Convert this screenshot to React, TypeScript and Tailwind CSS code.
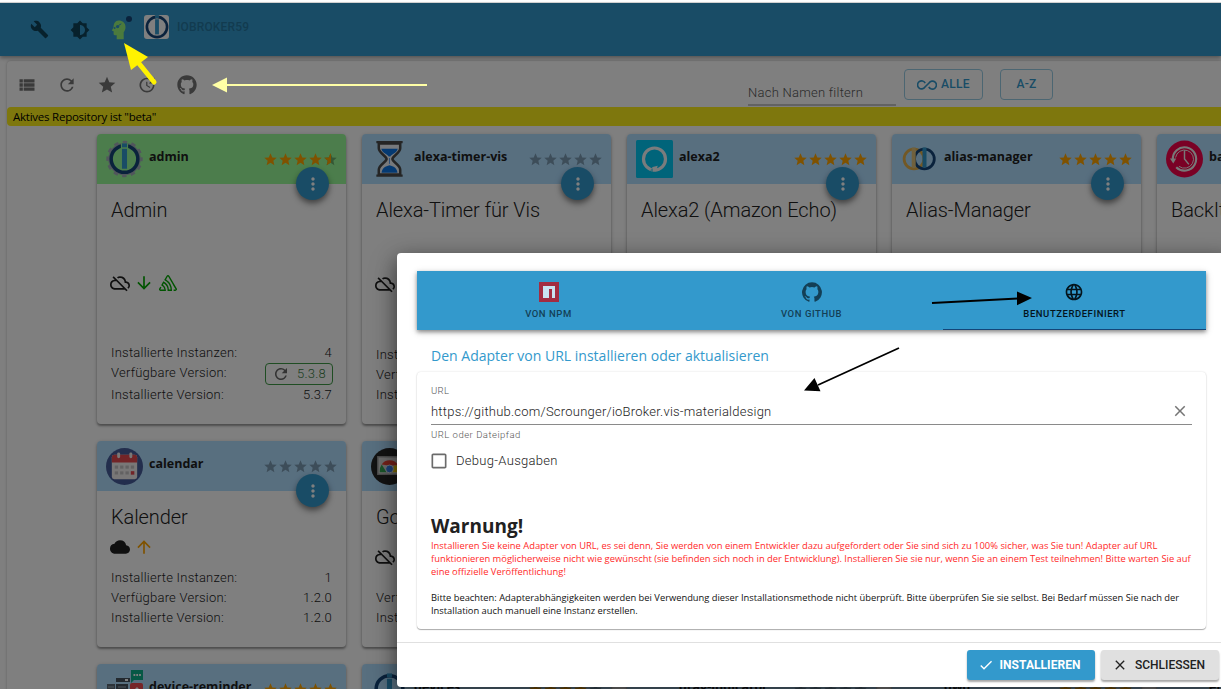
import * as React from "react"
import clsx from "clsx"
import {
  MdArrowDownward,
  MdArrowUpward,
  MdBrightness6,
  MdBuild,
  MdCheck,
  MdCheckBoxOutlineBlank,
  MdClose,
  MdLanguage,
  MdMoreVert,
  MdOutlineCloudOff,
  MdCloud,
  MdRefresh,
  MdStar,
  MdUpdate,
  MdViewList,
} from "react-icons/md"
import { FaGithub } from "react-icons/fa"
import { SiSentry } from "react-icons/si"

const GITHUB_MARK =
  "M12 .3a12 12 0 0 0-3.8 23.38c.6.12.83-.26.83-.57L9 21.07c-3.34.72-4.04-1.61-4.04-1.61-.55-1.39-1.34-1.76-1.34-1.76-1.08-.74.09-.73.09-.73 1.2.09 1.83 1.24 1.83 1.24 1.08 1.83 2.81 1.3 3.5 1 .1-.78.42-1.31.76-1.61-2.67-.3-5.47-1.33-5.47-5.93 0-1.31.47-2.38 1.24-3.22-.14-.3-.54-1.52.1-3.18 0 0 1-.32 3.3 1.23a11.5 11.5 0 0 1 6 0c2.28-1.55 3.29-1.23 3.29-1.23.64 1.66.24 2.88.12 3.18a4.65 4.65 0 0 1 1.23 3.22c0 4.61-2.8 5.63-5.48 5.92.42.36.81 1.1.81 2.22l-.01 3.29c0 .31.2.69.82.57A12 12 0 0 0 12 .3"

function GithubMark({ className }: { className?: string }) {
  return (
    <svg viewBox="0 0 24 24" fill="currentColor" className={className}>
      <path d={GITHUB_MARK} />
    </svg>
  )
}

function IoBrokerLogo({ className, gear }: { className?: string; gear?: boolean }) {
  return (
    <svg viewBox="0 0 38 38" className={className}>
      {gear && (
        <g fill="none" stroke="#a3acb8">
          <circle cx="19" cy="19" r="15.8" strokeWidth="1.8" />
          <circle cx="19" cy="19" r="17.2" strokeWidth="3" strokeDasharray="4.6 4.4" strokeDashoffset="2.3" />
        </g>
      )}
      <circle cx="19" cy="19" r="13.7" fill="none" stroke="#144578" strokeWidth="3.6" />
      <rect x="15.3" y="3" width="7.4" height="7" fill={gear ? "#98fb98" : "#fff"} fillOpacity={gear ? 1 : 0} />
      <rect x="16.4" y="3" width="5.2" height="4" fill="#3399cc" />
      <rect x="16.4" y="8.5" width="5.2" height="20.5" fill="#3399cc" />
    </svg>
  )
}

function ExpertIcon() {
  return (
    <svg viewBox="0 0 24 24" className="h-6 w-6">
      <path
        fill="#96f57b"
        d="M9.500 4.500c4.200 0 7 2.500 7 6.400 0 2.400-.9 4-1.800 5.300v7H7.700v-4H5.900c-.9 0-1.300-.6-1.300-1.400v-2.600l-1.800-.6 1.700-3.200c0-3.800 1.900-6.900 5-6.900z"
      />
      <circle cx="8.600" cy="10.600" r="1.700" fill="#3399cc" />
      <circle cx="5.600" cy="12" r="1" fill="#3399cc" />
      <path d="M9.500 9.500l2.800-1.700" stroke="#3399cc" strokeWidth="1" />
    </svg>
  )
}

function HourglassIcon() {
  return (
    <svg viewBox="0 0 38 38" className="h-[38px] w-[37px]">
      <path d="M8 3v5c0 5 8 8 8 11s-8 6-8 11v5h22v-5c0-5-8-8-8-11s8-6 8-11V3z" fill="#eef3f8" stroke="#4a4a4a" strokeWidth="2.6" />
      <path d="M10.5 8.500h17c-1.500 5-6.500 5.500-7.700 8h-1.600c-1.200-2.500-6.200-3-7.700-8z" fill="#0b74e5" />
      <path d="M10.800 33c.6-4.500 4-6.500 8.200-7.500 4.200 1 7.600 3 8.200 7.500z" fill="#0b74e5" />
      <path d="M19 18v6" stroke="#5a9bea" strokeWidth="1" />
      <path d="M5.500 1.700h27M5.500 36h27" stroke="#4a4a4a" strokeWidth="2.400" />
    </svg>
  )
}

function AlexaIcon() {
  return (
    <svg viewBox="0 0 37 38" className="h-[38px] w-[37px]">
      <rect width="37" height="38" rx="1.500" fill="#00c8f5" />
      <circle cx="18.500" cy="19" r="11" fill="none" stroke="#f4f8fa" strokeWidth="3.200" />
      <path d="M16.800 31.500v-2.900c0-.7-.4-1-1.100-1.300l6-1.500-1.500 5.800z" fill="#f4f8fa" />
      <path d="M15.500 28.500l1.500.6v2.700l-2.800-.8z" fill="#00c8f5" fillOpacity="0.5" />
    </svg>
  )
}

function AliasIcon() {
  return (
    <svg viewBox="0 0 37 38" className="h-[38px] w-[37px]">
      <g fill="none" strokeWidth="2.800">
        <circle cx="13" cy="19" r="9.900" stroke="#e4b04a" />
        <circle cx="23.400" cy="19" r="9.900" stroke="#144578" />
      </g>
      <rect x="10.700" y="7.500" width="4" height="20" fill="#e0c27a" />
      <rect x="21.500" y="7.500" width="4" height="20" fill="#3399cc" />
    </svg>
  )
}

function BackItUpIcon() {
  return (
    <svg viewBox="0 0 38 38" className="h-[38px] w-[37px]">
      <circle cx="19" cy="19" r="19" fill="#f4034a" />
      <g fill="none" stroke="#f0f0f0">
        <path d="M7 20A12 12 0 1 1 10.500 27.500" strokeWidth="2.200" />
        <path d="M9.800 17.500a9.300 9.300 0 1 1 3.500 9" strokeWidth="1" />
        <path d="M19 10v9l4.500 5.500" strokeWidth="1.500" />
      </g>
      <path d="M4 18.500h6.500l-3 5z" fill="#f0f0f0" />
    </svg>
  )
}

function CalendarIcon() {
  return (
    <svg viewBox="0 0 38 38" className="h-[37px] w-[37px]">
      <circle cx="19" cy="19" r="19" fill="#475d9a" />
      <rect x="6" y="7" width="26" height="25" rx="2.500" fill="#f2efef" />
      <path d="M8.500 7h21A2.500 2.500 0 0 1 32 9.500V15H6V9.500A2.500 2.500 0 0 1 8.500 7z" fill="#e5484f" />
      <rect x="11.500" y="4.500" width="3" height="6" rx="1.500" fill="#f2efef" />
      <rect x="24" y="4.500" width="3" height="6" rx="1.500" fill="#f2efef" />
      <g fill="#c6c3c4">
        {[9, 14.5, 20, 25.5].map((x) => (
          <rect key={x} x={x} y="18" width="3.400" height="3.200" />
        ))}
        {[9, 14.5, 20].map((x) => (
          <rect key={x} x={x} y="24" width="3.400" height="3.200" />
        ))}
      </g>
      <rect x="25.500" y="23.800" width="3.600" height="3.600" fill="#e5484f" />
    </svg>
  )
}

function ChromecastIcon() {
  return (
    <svg viewBox="0 0 38 38" className="h-[37px] w-[37px]">
      <circle cx="19" cy="19" r="19" fill="#262626" />
      <rect x="7" y="9" width="24" height="18" fill="#d8d8d8" stroke="#9a9a9a" strokeWidth="1.500" />
      <path d="M9 25a10.500 10.500 0 0 1 2-8l5 8z" fill="#35a853" />
      <path d="M11 17c3-6 14-6 17 1H18z" fill="#ea4335" />
      <path d="M28 18c1 2 1 5 0 7h-8l4-7z" fill="#fbd60a" />
      <circle cx="19" cy="21.500" r="4" fill="#3d82f0" stroke="#e8e8e8" />
    </svg>
  )
}

function DeviceReminderIcon() {
  return (
    <svg viewBox="0 0 37 38" className="h-[38px] w-[37px]">
      <rect x="10" y="8" width="14" height="4" fill="#46535e" />
      <rect x="19" y="9" width="3" height="2" fill="#fff" />
      <path d="M1 14h8v24H1z" fill="#5a6874" />
      <path d="M10 14h12v24H10z" fill="#46535e" />
      <path d="M2 17h6M12 17h8" stroke="#9fb0bd" strokeWidth="1" />
      <path d="M25 0h12v10h-9l-3 3z" fill="#0fb08a" />
      <path d="M27.500 5h1.800M30.300 5h1.800M33.100 5h1.800" stroke="#fff" strokeWidth="1.800" />
      <rect x="24" y="13" width="13" height="16" rx="2" fill="#ed4a50" />
      <path d="M28 20l3-3 3 3v4h-6z" fill="#fff" />
    </svg>
  )
}

interface Adapter {
  name: string
  title: string
  icon: React.ReactNode
  rating: number
  installed?: boolean
  status?: React.ReactNode
  statusClass?: string
  instances?: string
  available?: string
  version?: string
  update?: boolean
}

const cloudOff = <MdOutlineCloudOff className="size-5 text-[#202020]" />

const rows: { height: string; adapters: Adapter[] }[] = [
  {
    height: "h-[290px]",
    adapters: [
      {
        name: "admin",
        title: "Admin",
        icon: <IoBrokerLogo gear className="h-[38px] w-[37px]" />,
        rating: 4.5,
        installed: true,
        status: (
          <>
            {cloudOff}
            <MdArrowDownward className="size-5 text-[#00a800]" />
            <SiSentry className="ml-px size-[18px] text-[#00a800]" />
          </>
        ),
        statusClass: "mt-[51px]",
        instances: "4",
        available: "5.3.8",
        version: "5.3.7",
        update: true,
      },
      {
        name: "alexa-timer-vis",
        title: "Alexa-Timer für Vis",
        icon: <HourglassIcon />,
        rating: 0,
        status: cloudOff,
        statusClass: "mt-[52px]",
        instances: "1",
        available: "1.0.0",
        version: "1.0.0",
      },
      { name: "alexa2", title: "Alexa2 (Amazon Echo)", icon: <AlexaIcon />, rating: 5 },
      { name: "alias-manager", title: "Alias-Manager", icon: <AliasIcon />, rating: 5 },
      { name: "backitup", title: "BackItUp", icon: <BackItUpIcon />, rating: 5 },
    ],
  },
  {
    height: "h-[206px]",
    adapters: [
      {
        name: "calendar",
        title: "Kalender",
        icon: <CalendarIcon />,
        rating: 0,
        status: (
          <>
            <MdCloud className="size-5 text-[#202020]" />
            <MdArrowUpward className="size-5 text-[#ffa500]" />
          </>
        ),
        statusClass: "mt-[8px]",
        instances: "1",
        available: "1.2.0",
        version: "1.2.0",
      },
      {
        name: "chromecast",
        title: "Google Chromecast",
        icon: <ChromecastIcon />,
        rating: 4,
        status: cloudOff,
        statusClass: "mt-[18px]",
        available: "2.3.1",
        version: "2.3.1",
      },
    ],
  },
  {
    height: "h-[206px]",
    adapters: [
      { name: "device-reminder", title: "Device-Reminder", icon: <DeviceReminderIcon />, rating: 5 },
      { name: "devices", title: "Geräte", icon: <IoBrokerLogo className="h-[38px] w-[37px]" />, rating: 4 },
      { name: "drag-indicator", title: "Drag-Indicator", icon: null, rating: 0 },
      { name: "dwd", title: "DWD", icon: null, rating: 5 },
      { name: "energymanager", title: "Energie", icon: null, rating: 5 },
    ],
  },
]

function Rating({ value }: { value: number }) {
  return (
    <div className="flex">
      {[0, 1, 2, 3, 4].map((i) => (
        <span key={i} className="relative size-[15px]">
          <MdStar className={clsx("size-[15px]", value >= i + 1 ? "text-[#ffa500]" : "text-black/30")} />
          {value > i && value < i + 1 && (
            <span className="absolute inset-y-0 left-0 w-1/2 overflow-hidden">
              <MdStar className="size-[15px] text-[#ffa500]" />
            </span>
          )}
        </span>
      ))}
    </div>
  )
}

function InfoRow({ label, children }: { label: string; children: React.ReactNode }) {
  return (
    <div className="flex h-5 items-center justify-between text-[13px] leading-5 font-light tracking-[0.23px] whitespace-nowrap">
      <span>{label}</span>
      <span>{children}</span>
    </div>
  )
}

function AdapterCard({ adapter, height }: { adapter: Adapter; height: string }) {
  return (
    <div
      className={clsx(
        "relative flex w-[249px] shrink-0 flex-col rounded bg-white shadow-[0_2px_2px_rgba(0,0,0,0.3),0_1px_4px_rgba(0,0,0,0.2)]",
        height
      )}
    >
      <div
        className={clsx(
          "flex h-[50px] shrink-0 items-center rounded-t pr-[8px] pl-[9px]",
          adapter.installed ? "bg-[#98fb98]" : "bg-[#b0deff]"
        )}
      >
        <div className="w-[37px] shrink-0">{adapter.icon}</div>
        <span className="mb-[4px] ml-[6px] flex-1 font-['Open_Sans',sans-serif] text-[12.500px] font-bold whitespace-nowrap">
          {adapter.name}
        </span>
        <Rating value={adapter.rating} />
      </div>
      <div className="absolute top-[33px] right-[17px] flex size-[33px] items-center justify-center rounded-full bg-[#3399cc] text-white shadow-[0_3px_5px_rgba(0,0,0,0.35),0_4px_9px_rgba(0,0,0,0.2)]">
        <MdMoreVert className="size-[20px]" />
      </div>
      <div className="flex flex-1 flex-col px-[14px] pt-[14px] pb-[19px]">
        <div className="text-[20px] leading-6 font-light tracking-[-0.1px] whitespace-nowrap">{adapter.title}</div>
        <div className={clsx("-ml-px flex h-5 items-center gap-[4px]", adapter.statusClass)}>{adapter.status}</div>
        <div className="mt-auto">
          {adapter.instances && <InfoRow label="Installierte Instanzen:">{adapter.instances}</InfoRow>}
          {adapter.available && !adapter.update && <InfoRow label="Verfügbare Version:">{adapter.available}</InfoRow>}
          {adapter.available && adapter.update && (
            <div className="flex h-[22px] items-center justify-between text-[13px] font-light tracking-[0.23px] whitespace-nowrap">
              <span className="mb-[2px]">Verfügbare Version:</span>
              <span className="-mr-px flex h-[22px] w-[68px] items-center justify-between rounded border border-[#3f9b46] pr-[6px] pl-[6px] text-[#3a7d3f]">
                <MdRefresh className="size-[18px] text-[#666]" />
                {adapter.available}
              </span>
            </div>
          )}
          {adapter.version && <InfoRow label="Installierte Version:">{adapter.version}</InfoRow>}
        </div>
      </div>
    </div>
  )
}

function Header() {
  return (
    <header className="relative flex h-[53px] shrink-0 items-start bg-[#3399cc] pl-[30px] shadow-[0_2px_4px_rgba(0,0,0,0.35)]">
      <MdBuild className="mt-[17px] size-[19px] text-[#0f4259]" />
      <MdBrightness6 className="mt-[17px] ml-[21px] size-[20px] text-[#0f4259]" />
      <div className="relative mt-[13px] ml-[19px]">
        <ExpertIcon />
        <span className="absolute top-0 right-[1px] size-[6px] rounded-full bg-[#144578]" />
      </div>
      <div className="mt-[12px] ml-[11px] flex h-6 w-[25px] items-center justify-center rounded-[3px] bg-white">
        <IoBrokerLogo className="size-7 shrink-0" />
      </div>
      <span className="mt-[16px] ml-[8px] text-[12px] leading-4 font-medium tracking-[0.15px] text-[#2577a0]">
        IOBROKER59
      </span>
    </header>
  )
}

function Toolbar() {
  return (
    <div className="flex h-[45px] shrink-0 items-center pl-[10px] text-[#757575]">
      <div className="flex w-[742px] items-center gap-[20px]">
        <MdViewList className="size-5" />
        <MdRefresh className="size-5" />
        <MdStar className="size-5" />
        <MdUpdate className="size-5" />
        <FaGithub className="size-5" />
      </div>
      <div className="-ml-[11px] h-6 w-[148px] translate-y-[8.500px] border-b border-[#8a8a8a] text-[13px] leading-[22px] font-light tracking-[0.25px] text-[#555]">
        Nach Namen filtern
      </div>
      <button className="ml-[8px] flex h-[31px] w-[79px] items-center justify-center gap-1 rounded border border-[#99cce5] pb-px text-[12px] font-medium tracking-[0.3px] text-[#3399cc]">
        <svg viewBox="0 0 20 10" className="mt-[2px] h-[10px] w-[20px]" fill="none" stroke="currentColor" strokeWidth="1.600">
          <path d="M8.200 3.200A4 4 0 1 0 8 7l4-4a4 4 0 1 1-.2 3.800" />
        </svg>
        ALLE
      </button>
      <button className="ml-[17px] h-[31px] w-[53px] rounded border border-[#99cce5] pb-px text-[12px] font-medium tracking-[0.3px] text-[#3399cc]">
        A-Z
      </button>
    </div>
  )
}

function InstallDialog() {
  return (
    <div className="absolute top-[253px] left-[397px] flex h-[434px] w-[834px] flex-col rounded bg-white shadow-[0_6px_20px_rgba(0,0,0,0.4),0_10px_30px_rgba(0,0,0,0.25)]">
      <div className="flex flex-1 flex-col pt-[18px] pl-5">
        <div className="flex h-[59px] w-[789px] shrink-0 bg-[#3399cc] text-[9.500px] font-medium tracking-[0.55px] text-[#133f56] shadow-[0_2px_4px_rgba(0,0,0,0.4),0_2px_8px_rgba(0,0,0,0.15)]">
          <div className="flex flex-1 flex-col items-center pt-[11px]">
            <svg viewBox="0 0 20 20" className="size-5">
              <rect width="20" height="20" fill="#a32c41" />
              <path d="M4 4h12v12h-3V7h-3v9H4z" fill="#c9e2f1" />
            </svg>
            <span className="mt-[6px] leading-3">VON NPM</span>
          </div>
          <div className="flex flex-1 flex-col items-center pt-[11px]">
            <GithubMark className="size-5" />
            <span className="mt-[6px] leading-3">VON GITHUB</span>
          </div>
          <div className="flex flex-1 flex-col items-center border-b border-[#144578] pt-[11px] text-[#04141c]">
            <MdLanguage className="-ml-px size-5" />
            <span className="mt-[6px] leading-3">BENUTZERDEFINIERT</span>
          </div>
        </div>
        <div className="mt-[15px] h-[22px] pl-[14px] font-['Open_Sans',sans-serif] text-[14.030px] leading-[22px] text-[#3399cc]">
          Den Adapter von URL installieren oder aktualisieren
        </div>
        <div className="mt-[5px] h-[257px] w-[789px] rounded px-[14px] pt-[13px] shadow-[0_1px_1px_rgba(0,0,0,0.3),0_0_2px_rgba(0,0,0,0.15)]">
          <div className="text-[9.500px] leading-3 font-light tracking-[0.3px] text-[#555]">URL</div>
          <div className="flex h-[28px] w-[761px] items-center justify-between border-b border-[#8a8a8a] text-[13px] font-light tracking-[0.23px] text-[#222]">
            <span className="pt-[2px]">https://github.com/Scrounger/ioBroker.vis-materialdesign</span>
            <MdClose className="mt-px mr-[3px] size-[18px] text-[#757575]" />
          </div>
          <div className="mt-[4px] text-[9.500px] leading-3 font-light tracking-[0.5px] text-[#555]">
            URL oder Dateipfad
          </div>
          <div className="mt-[9px] flex h-[22px] items-center">
            <MdCheckBoxOutlineBlank className="-ml-[2px] size-5 text-[#6b6b6b]" />
            <span className="ml-[7px] text-[13px] font-light tracking-[0.3px] text-[#222]">Debug-Ausgaben</span>
          </div>
          <div className="font-['Open_Sans',sans-serif]">
            <div className="mt-[41px] text-[19px] leading-[26px] font-bold text-[#212121]">Warnung!</div>
            <div className="text-[9.380px] leading-[13px] whitespace-nowrap text-[#ff2a2a]">
              <div>
                Installieren Sie keine Adapter von URL, es sei denn, Sie werden von einem Entwickler dazu aufgefordert
                oder Sie sind sich zu 100% sicher, was Sie tun! Adapter auf URL
              </div>
              <div>
                funktionieren möglicherweise nicht wie gewünscht (sie befinden sich noch in der Entwicklung).
                Installieren Sie sie nur, wenn Sie an einem Test teilnehmen! Bitte warten Sie auf
              </div>
              <div>eine offizielle Veröffentlichung!</div>
            </div>
            <div className="mt-[13px] text-[9.340px] leading-[13px] whitespace-nowrap text-[#111]">
              <div>
                Bitte beachten: Adapterabhängigkeiten werden bei Verwendung dieser Installationsmethode nicht
                überprüft. Bitte überprüfen Sie sie selbst. Bei Bedarf müssen Sie nach der
              </div>
              <div>Installation auch manuell eine Instanz erstellen.</div>
            </div>
          </div>
        </div>
      </div>
      <div className="flex h-[45px] shrink-0 gap-[6px] border-t border-[#e0e0e0] pt-[7px] pl-[570px] text-[12px] font-medium">
        <button className="flex h-[30px] w-[128px] items-center justify-center gap-[6px] rounded-[3px] bg-[#3399cc] pr-[4px] font-bold tracking-[0.05px] text-white shadow-[0_2px_2px_rgba(0,0,0,0.35)]">
          <MdCheck className="size-4" />
          INSTALLIEREN
        </button>
        <button className="flex h-[30px] w-[118px] items-center justify-center gap-[7px] rounded-[3px] bg-[#e0e0e0] pr-[3px] text-[#212121] shadow-[0_2px_2px_rgba(0,0,0,0.35)]">
          <MdClose className="size-4" />
          SCHLIESSEN
        </button>
      </div>
    </div>
  )
}

function Arrows() {
  return (
    <svg viewBox="0 0 1221 689" className="pointer-events-none absolute inset-0 h-[689px] w-[1221px]">
      <path d="M137 61l17 21" stroke="#fff200" strokeWidth="5" strokeLinecap="round" />
      <path d="M124 43l24 14-17 13z" fill="#fff200" />
      <path d="M226 85h201" stroke="#ffffa6" strokeWidth="2" />
      <path d="M212 85l15-7.500v15z" fill="#ffffa6" />
      <path d="M932 303l86-4.500M899 348l-81 37" stroke="#000" strokeWidth="1.800" />
      <path d="M1032 298l-15-6.500v13.800zM804 390.500l10.500-12.500 6 13.300z" />
    </svg>
  )
}

export default function App() {
  return (
    <div className="relative h-[689px] w-[1221px] overflow-hidden bg-white pt-[3px] font-['Roboto',sans-serif] text-[#212121]">
      <Header />
      <main className="mt-[5px] ml-[7px] w-[1214px] rounded-tl bg-white pt-[1px] shadow-[0_0_3px_rgba(0,0,0,0.25)]">
        <Toolbar />
        <div className="h-[19px] rounded-l-[4px] bg-[#fdee1a] pl-[6px] font-['Open_Sans',sans-serif] text-[11.500px] leading-[20px] tracking-[-0.240px] text-black">
          Aktives Repository ist "beta"
        </div>
        <div className="mt-2 ml-[90px] flex flex-col gap-[17px]">
          {rows.map((row) => (
            <div key={row.height + row.adapters[0].name} className="flex gap-4">
              {row.adapters.map((adapter) => (
                <AdapterCard key={adapter.name} adapter={adapter} height={row.height} />
              ))}
            </div>
          ))}
        </div>
      </main>
      <div className="absolute inset-x-0 top-[3px] bottom-0 bg-black/50" />
      <div className="absolute inset-x-0 top-[2px] h-px bg-[#d0d0d0]" />
      <InstallDialog />
      <Arrows />
    </div>
  )
}
